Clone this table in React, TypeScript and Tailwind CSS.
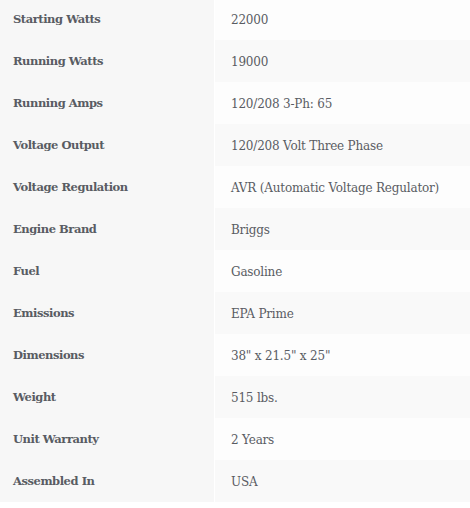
import React from "react";

const specs: [string, string][] = [
  ["Starting Watts", "22000"],
  ["Running Watts", "19000"],
  ["Running Amps", "120/208 3-Ph: 65"],
  ["Voltage Output", "120/208 Volt Three Phase"],
  ["Voltage Regulation", "AVR (Automatic Voltage Regulator)"],
  ["Engine Brand", "Briggs"],
  ["Fuel", "Gasoline"],
  ["Emissions", "EPA Prime"],
  ["Dimensions", '38" x 21.5" x 25"'],
  ["Weight", "515 lbs."],
  ["Unit Warranty", "2 Years"],
  ["Assembled In", "USA"],
];

const App: React.FC = () => {
  return (
    <div className="w-[470px] h-[508px] bg-white overflow-hidden">
      <div className="-mt-[2px] flex flex-col text-[#595c63] font-['DejaVu_Serif',serif]">
        {specs.map(([label, value], i) => (
          <div key={label} className="flex h-[42px]">
            <div className="w-[214px] shrink-0 bg-[#f7f7f7] flex items-center pl-[13px] pt-[2px] text-[11.5px] font-bold tracking-[-0.45px]">
              {label}
            </div>
            <div
              className={
                i % 2 === 0
                  ? "ml-px flex-1 bg-[#fdfdfd] flex items-center pl-[16px] pt-[2px] text-[12px] tracking-[-0.2px]"
                  : "ml-px flex-1 bg-[#f9f9f9] flex items-center pl-[16px] pt-[2px] text-[12px] tracking-[-0.2px]"
              }
            >
              {value}
            </div>
          </div>
        ))}
      </div>
    </div>
  );
};

export default App;
